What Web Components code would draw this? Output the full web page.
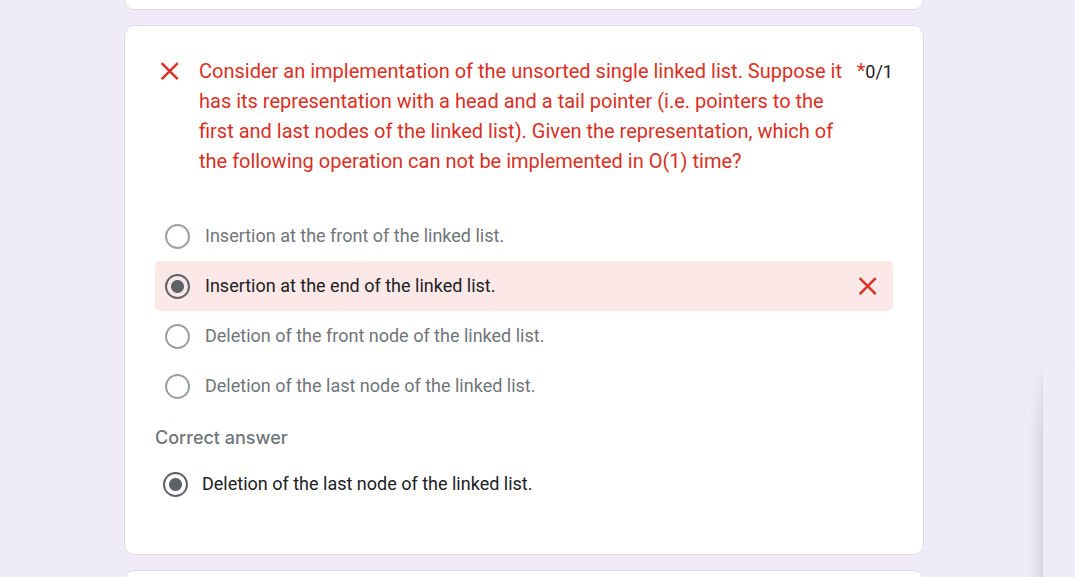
<!DOCTYPE html>
<html lang="en">
<head>
<meta charset="utf-8">
<meta name="viewport" content="width=device-width, initial-scale=1">
<title>Quiz results</title>
<style>
  html { background: #efebf8; overflow-x: hidden; }
  body { margin: 0; font-family: Roboto, "Liberation Sans", sans-serif; color: #202124; }
</style>
</head>
<body>
<quiz-page>
  <quiz-card class="edge"></quiz-card>
  <quiz-card>
    <question-heading score="0/1">Consider an implementation of the unsorted single linked list. Suppose it has its representation with a head and a tail pointer (i.e. pointers to the first and last nodes of the linked list). Given the representation, which of the following operation can not be implemented in O(1) time?</question-heading>
    <choice-list>
      <quiz-choice>Insertion at the front of the linked list.</quiz-choice>
      <quiz-choice picked wrong>Insertion at the end of the linked list.</quiz-choice>
      <quiz-choice>Deletion of the front node of the linked list.</quiz-choice>
      <quiz-choice>Deletion of the last node of the linked list.</quiz-choice>
    </choice-list>
    <correct-answer>
      <quiz-choice picked compact>Deletion of the last node of the linked list.</quiz-choice>
    </correct-answer>
  </quiz-card>
  <quiz-card class="edge"></quiz-card>
</quiz-page>
<side-panel></side-panel>

<script>
  const define = (name, html, setup) => customElements.define(name, class extends HTMLElement {
    connectedCallback() {
      if (this.shadowRoot) return;
      this.attachShadow({ mode: 'open' }).innerHTML = html;
      if (setup) setup(this, this.shadowRoot);
    }
  });

  define('wrong-icon', `
    <style>
      :host { display: block; flex: none; width: 30px; height: 30px; color: #d93025; }
      svg { display: block; width: 100%; height: 100%; }
    </style>
    <svg viewBox="0 0 30 30" role="img" aria-label="Incorrect"><path d="M6.7 7.1 22.7 23.1M22.7 7.1 6.7 23.1" fill="none" stroke="currentColor" stroke-width="2.5"/></svg>`);

  define('quiz-page', `
    <style>
      :host { display: block; padding-right: 27px; }
      main { display: flex; flex-direction: column; gap: 15px; max-width: 800px; margin: 0 auto; }
    </style>
    <main><slot></slot></main>`);

  define('quiz-card', `
    <style>
      :host { display: block; box-sizing: border-box; padding: 30px 30px 45px; background: #fff; border: 1px solid #dadce0; border-radius: 10px; }
      :host(.edge) { padding: 0; min-height: 30px; }
      :host(.edge:first-child) { margin-top: -20px; }
      :host(.edge:last-child) { margin-bottom: -23px; }
    </style>
    <slot></slot>`);

  define('question-heading', `
    <style>
      :host { display: flex; align-items: flex-start; color: #d93025; font-size: 20px; line-height: 30px; }
      h2 { flex: 1; margin: 0 0 0 14px; font: inherit; }
      .score { flex: none; }
      .points { color: #202124; font-size: 18px; }
    </style>
    <wrong-icon></wrong-icon>
    <h2><slot></slot></h2>
    <div class="score">*<span class="points"></span></div>`,
    (host, root) => { root.querySelector('.points').textContent = host.getAttribute('score'); });

  define('choice-list', `
    <style>
      :host { display: block; margin-top: 35px; }
    </style>
    <div role="radiogroup" aria-label="Answers"><slot></slot></div>`);

  define('quiz-choice', `
    <style>
      :host { display: flex; align-items: center; min-height: 50px; padding: 0 10px; border-radius: 5px; color: #70757a; font-size: 18px; line-height: 24px; }
      :host([picked]) { color: #202124; }
      :host([wrong]) { background: #fce8e6; }
      :host([compact]) { padding: 0 8px; }
      label { display: flex; flex: 1; align-items: center; gap: 15px; }
      :host([compact]) label { gap: 14px; }
      input { appearance: none; flex: none; box-sizing: border-box; width: 25px; height: 25px; margin: 1px 0 0; border: 2px solid #9aa0a6; border-radius: 50%; }
      input:checked { border-color: #5f6368; background: radial-gradient(circle, #5f6368 6px, transparent 7px); }
    </style>
    <label><input type="radio"><span><slot></slot></span></label>`,
    (host, root) => {
      const input = root.querySelector('input');
      input.checked = host.hasAttribute('picked');
      input.disabled = true;
      if (host.hasAttribute('wrong')) root.append(document.createElement('wrong-icon'));
    });

  define('correct-answer', `
    <style>
      :host { display: block; margin-top: 12px; }
      h3 { margin: 0 0 6px; color: #70757a; font: 500 18px/30px Inter, "Liberation Sans", sans-serif; }
    </style>
    <h3>Correct answer</h3>
    <slot></slot>`);

  define('side-panel', `
    <style>
      :host { position: fixed; top: 363px; right: 0; bottom: -40px; width: 32px; background: #efebf8; border-radius: 10px 0 0 0;
        box-shadow: 0 0 1px rgba(60, 40, 60, .14), 0 12px 16px rgba(60, 30, 50, .12), 0 40px 30px -4px rgba(60, 30, 50, .1); }
    </style>`);
</script>
</body>
</html>
